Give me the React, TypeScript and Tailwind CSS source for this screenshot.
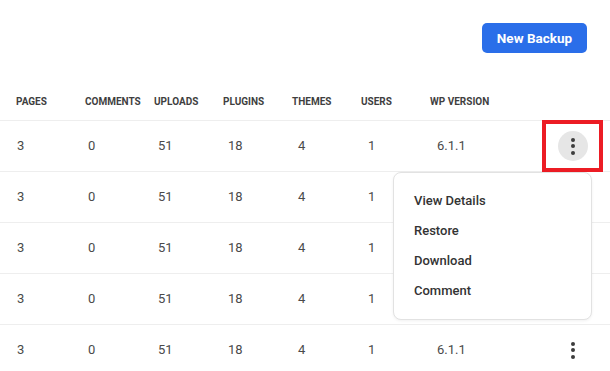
import React from 'react';

const columns = ['Pages', 'Comments', 'Uploads', 'Plugins', 'Themes', 'Users', 'WP Version'];

const rows = [
    { pages: 3, comments: 0, uploads: 51, plugins: 18, themes: 4, users: 1, version: '6.1.1' },
    { pages: 3, comments: 0, uploads: 51, plugins: 18, themes: 4, users: 1, version: '6.1.1' },
    { pages: 3, comments: 0, uploads: 51, plugins: 18, themes: 4, users: 1, version: '6.1.1' },
    { pages: 3, comments: 0, uploads: 51, plugins: 18, themes: 4, users: 1, version: '6.1.1' },
    { pages: 3, comments: 0, uploads: 51, plugins: 18, themes: 4, users: 1, version: '6.1.1' },
];

const menuItems = ['View Details', 'Restore', 'Download', 'Comment'];

// Vertical three-dot kebab
const Kebab = ({ active }: { active?: boolean }) => (
    <div className="relative">
        <button className={`w-[30px] h-[30px] rounded-full flex flex-col items-center justify-center gap-[2.5px] ${active ? 'bg-[#e6e6e6]' : ''}`}>
            <span className="w-[4px] h-[4px] rounded-full bg-[#3d3d3d]" />
            <span className="w-[4px] h-[4px] rounded-full bg-[#3d3d3d]" />
            <span className="w-[4px] h-[4px] rounded-full bg-[#3d3d3d]" />
        </button>
        {active && (
            <div className="absolute -left-[16px] -right-[15px] -top-[11px] -bottom-[11px] border-4 border-[#ec1c24] pointer-events-none" />
        )}
    </div>
);

export default function App() {
    return (
        <div className="relative w-[610px] h-[371px] overflow-hidden bg-white text-[#444] font-['Roboto',sans-serif]">
            <div className="flex justify-end pt-[23px] pr-[23px]">
                <button className="w-[105px] h-[30px] rounded-[5px] bg-[#2a6ee9] text-white text-[13.5px] font-bold">
                    New Backup
                </button>
            </div>

            <div className="mt-[27px]">
                <div className="grid grid-cols-[69px_69px_69px_69px_69px_69px_1fr] pl-[16px] h-[40px] items-center pt-[2px]">
                    {columns.map(c => (
                        <div key={c} className="text-[10px] font-bold uppercase text-[#3f3f3f]">{c}</div>
                    ))}
                </div>

                {rows.map((r, i) => (
                    <div key={i} className="flex items-center h-[51px] border-t border-[#eeeeee] pl-[17px] pr-[22px] text-[13px] text-[#4a4a4a]">
                        <div className="grid grid-cols-[70px_70px_70px_70px_70px_70px_1fr] flex-1">
                            <div>{r.pages}</div>
                            <div className="pl-[1px]">{r.comments}</div>
                            <div className="pl-[1px]">{r.uploads}</div>
                            <div className="pl-[1px]">{r.plugins}</div>
                            <div className="pl-[1px]">{r.themes}</div>
                            <div className="pl-[1px]">{r.users}</div>
                            {/* rows under the open menu are hidden by it */}
                            <div className={i >= 1 && i <= 3 ? 'invisible' : ''}>{r.version}</div>
                        </div>
                        <Kebab active={i === 0} />
                    </div>
                ))}
            </div>

            {/* dropdown for first row */}
            <div className="absolute left-[393px] top-[172px] w-[199px] h-[148px] bg-white rounded-[8px] border border-[#e2e2e2] shadow-[0_1px_3px_rgba(0,0,0,0.06)] pt-[13px] pl-[20px]">
                {menuItems.map(m => (
                    <div key={m} className="h-[30px] flex items-center text-[13px] font-medium text-[#333]">{m}</div>
                ))}
            </div>
        </div>
    );
}
